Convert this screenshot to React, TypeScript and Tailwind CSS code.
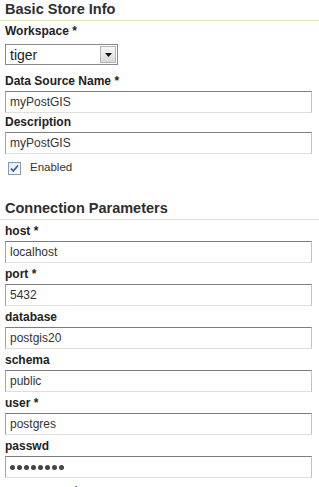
import React from "react";

const labelCls =
  "block font-bold text-[12px] text-[#222] font-['Liberation_Sans',Arial,sans-serif]";

const inputCls =
  "block w-[307px] h-[22px] pl-[4px] bg-white text-[12px] text-[#333] font-['Liberation_Sans',Arial,sans-serif] border border-t-[#7c7c7c] border-l-[#a5a5a5] border-r-[#c3c3c3] border-b-[#dedede] outline-none";

function Heading({ children }: { children: React.ReactNode }) {
  return (
    <h2 className="h-[21px] leading-[19px] pl-[5px] text-[14.5px] font-bold text-[#2e2e2e] border-b border-[#dfe4c3] font-['Liberation_Sans',Arial,sans-serif]">
      {children}
    </h2>
  );
}

function Field({ label, value }: { label: string; value?: string }) {
  return (
    <div>
      <label className={`${labelCls} pt-[3px] h-[21px] leading-[17px]`}>{label}</label>
      <input className={inputCls} type="text" defaultValue={value} readOnly />
    </div>
  );
}

export default function App() {
  return (
    <div className="w-[319px] h-[487px] overflow-hidden bg-white">
      <Heading>Basic Store Info</Heading>
      <div className="px-[5px]">
        <label className={`${labelCls} h-[23px] leading-[16px] pt-[2px]`}>Workspace *</label>
        <div className="flex items-center justify-between w-[113px] h-[21px] border border-[#8a8a8a] bg-white pl-[4px] pr-[1px]">
          <span className="text-[14px] text-[#222] font-['Liberation_Sans',Arial,sans-serif] leading-none">
            tiger
          </span>
          <span className="flex items-center justify-center w-[16px] h-[17px] border border-[#b5b5b5] bg-gradient-to-b from-[#f7f7f7] to-[#d9d9d9]">
            <svg width="7" height="4" viewBox="0 0 7 4">
              <path d="M0 0h7L3.5 4z" fill="#111" />
            </svg>
          </span>
        </div>

        <div className="h-[5px]" />
        <Field label="Data Source Name *" value="myPostGIS" />
        <label className={`${labelCls} h-[19px] leading-[17px] pt-[1px]`}>Description</label>
        <input className={inputCls} type="text" defaultValue="myPostGIS" readOnly />

        <div className="flex items-center gap-[9px] pl-[3px] h-[24px] mt-[2px]">
          <span className="flex items-center justify-center w-[13px] h-[13px] border border-[#8799ad] bg-gradient-to-br from-[#e6ebf2] to-[#fbfcfd]">
            <svg width="9" height="9" viewBox="0 0 9 9">
              <path d="M1 4.5l2.3 2.5L8 1.5" stroke="#3c5d9c" strokeWidth="1.8" fill="none" />
            </svg>
          </span>
          <span className="text-[11.5px] text-[#333] font-['Liberation_Sans',Arial,sans-serif]">
            Enabled
          </span>
        </div>
      </div>

      <div className="h-[19px]" />
      <Heading>Connection Parameters</Heading>
      <div className="px-[5px]">
        <Field label="host *" value="localhost" />
        <Field label="port *" value="5432" />
        <Field label="database" value="postgis20" />
        <Field label="schema" value="public" />
        <Field label="user *" value="postgres" />
        <div>
          <label className={`${labelCls} pt-[3px] h-[21px] leading-[17px]`}>passwd</label>
          <div className={`${inputCls} flex items-center gap-[2px]`}>
            {Array.from({ length: 8 }).map((_, i) => (
              <span key={i} className="w-[5px] h-[5px] rounded-full bg-[#444]" />
            ))}
          </div>
        </div>
        <label className={`${labelCls} pt-[5px] h-[21px] leading-[17px]`}>namespace *</label>
      </div>
    </div>
  );
}
